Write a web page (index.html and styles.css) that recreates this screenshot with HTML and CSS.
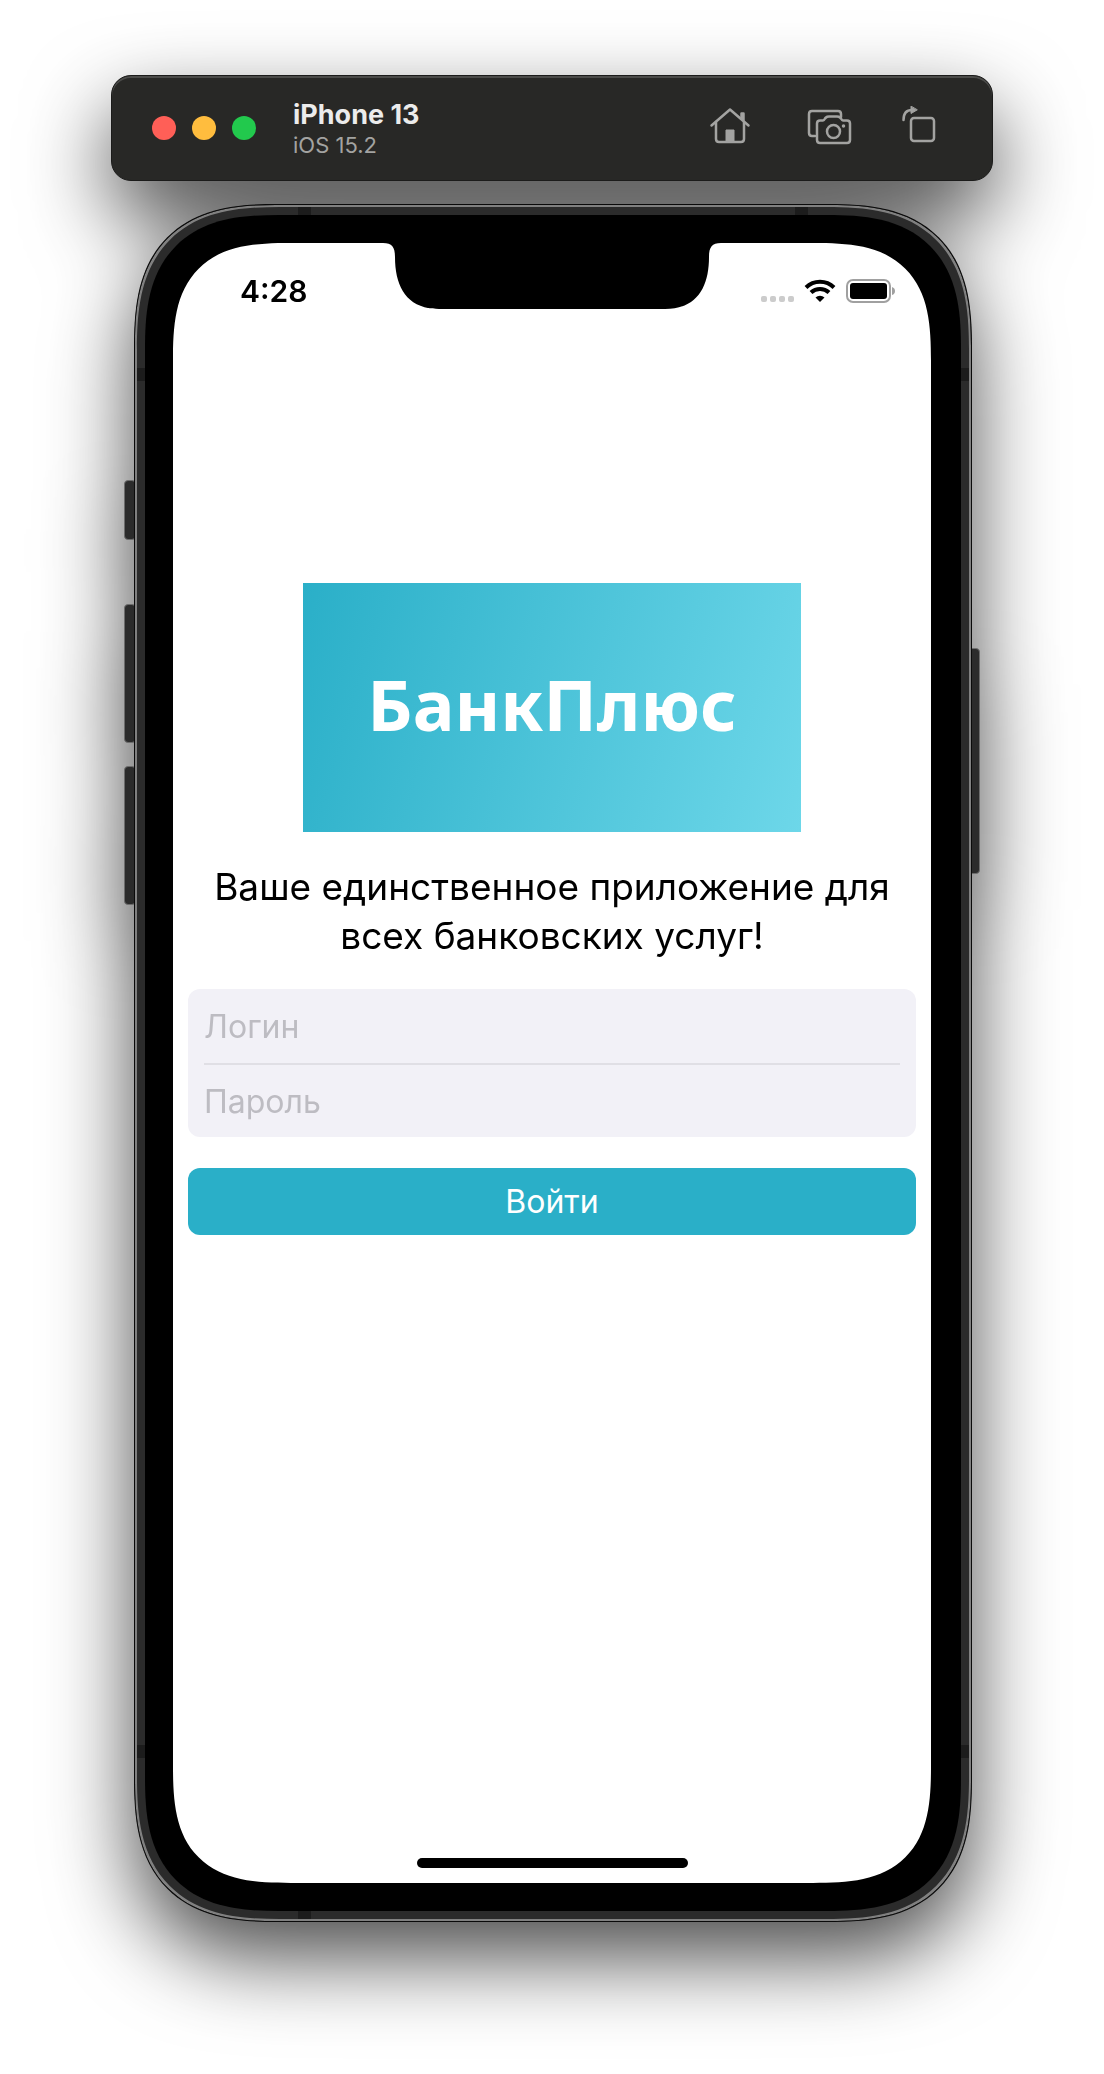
FILE: index.html
```html
<!DOCTYPE html>
<html lang="ru">
<head>
  <meta charset="utf-8">
  <meta name="viewport" content="width=device-width, initial-scale=1">
  <title>БанкПлюс</title>
  <link rel="stylesheet" href="styles.css">
</head>
<body>
  <main class="simulator">
    <header class="toolbar">
      <div class="lights">
        <button class="light light-close" type="button" aria-label="Close"></button>
        <button class="light light-minimize" type="button" aria-label="Minimize"></button>
        <button class="light light-zoom" type="button" aria-label="Zoom"></button>
      </div>
      <div class="device">
        <h1 class="device-name">iPhone 13</h1>
        <p class="device-os">iOS 15.2</p>
      </div>
      <div class="tools">
        <button class="tool" type="button" aria-label="Home">
          <svg width="44" height="44" viewBox="0 2 44 44" fill="none" stroke="currentColor" stroke-width="2.500" stroke-linecap="round" stroke-linejoin="round">
            <path d="M3.500 21.500 22 5.500l18.500 16" />
            <path d="M8 18v17q0 3 3 3h22q3 0 3-3V18" />
            <path d="M33.500 14V9.500h2V16" />
            <path d="M18 38V26h8v12z" fill="currentColor" stroke-width="1" />
          </svg>
        </button>
        <button class="tool" type="button" aria-label="Screenshot">
          <svg width="50" height="44" viewBox="-4 1 50 44" fill="none" stroke="currentColor" stroke-width="2.500" stroke-linecap="round" stroke-linejoin="round">
            <path d="M9 31H6q-3 0-3-3V9q0-3 3-3h26q3 0 3 3v3" />
            <path d="M14 15.500h3q1 0 2-2l1-1q1-1 3-1h8q2 0 3 1l1 1q1 2 2 2h4q3 0 3 3V35q0 3-3 3H14q-3 0-3-3V18.500q0-3 3-3z" />
            <circle cx="27.500" cy="26.500" r="6.500" />
            <circle cx="37.500" cy="21" r="1" fill="currentColor" stroke-width="1.500" />
          </svg>
        </button>
        <button class="tool" type="button" aria-label="Rotate">
          <svg width="36" height="44" viewBox="4 1 36 44" fill="none" stroke="currentColor" stroke-width="2.500" stroke-linecap="round" stroke-linejoin="round">
            <rect x="13" y="13" width="23" height="23" rx="3" />
            <path d="M5.500 15q0-10 8.500-10" />
            <path d="M13 1.500v7l6-3.500z" fill="currentColor" stroke-width="1" />
          </svg>
        </button>
      </div>
    </header>

    <section class="phone">
      <span class="key key-mute"></span>
      <span class="key key-up"></span>
      <span class="key key-down"></span>
      <span class="key key-power"></span>
      <div class="frame">
        <span class="band band-top-left"></span>
        <span class="band band-top-right"></span>
        <span class="band band-bottom-left"></span>
        <span class="band band-side band-left-top"></span>
        <span class="band band-side band-right-top"></span>
        <span class="band band-side band-left-bottom"></span>
        <span class="band band-side band-right-bottom"></span>
        <div class="bezel">
          <div class="screen">
            <svg class="notch" width="338" height="66" viewBox="0 0 338 66">
              <path d="M0 0C9 0 12 4 12 14C12 44 24 66 56 66H282C314 66 326 44 326 14C326 4 329 0 338 0z" />
            </svg>
            <div class="status">
              <time class="clock">4:28</time>
              <div class="indicators">
                <svg width="34" height="24" viewBox="0 0 34 24" fill="#cccccc">
                  <rect x="1" y="17" width="6" height="6" rx="2" />
                  <rect x="10" y="17" width="6" height="6" rx="2" />
                  <rect x="19" y="17" width="6" height="6" rx="2" />
                  <rect x="28" y="17" width="6" height="6" rx="2" />
                </svg>
                <svg width="32" height="24" viewBox="0 0 32 24" fill="none" stroke="#000000" stroke-width="4">
                  <path d="M2 8.500a20 20 0 0 1 28 0" />
                  <path d="M7 13.500a13 13 0 0 1 18 0" />
                  <path d="M16 23l-4.500-4.500a6.500 6.500 0 0 1 9 0z" fill="#000000" stroke="none" />
                </svg>
                <svg width="50" height="24" viewBox="0 0 50 24">
                  <rect x="1" y="1" width="43" height="22" rx="6" fill="none" stroke="#a0a0a0" stroke-width="2" />
                  <rect x="4" y="4" width="37" height="16" rx="3" />
                  <path d="M46 8q3 1 3 4t-3 4z" fill="#a0a0a0" />
                </svg>
              </div>
            </div>

            <div class="welcome">
              <div class="logo">БанкПлюс</div>
              <p class="tagline">Ваше единственное приложение для всех банковских услуг!</p>
              <form class="login">
                <div class="fields">
                  <input class="field" type="text" placeholder="Логин" aria-label="Логин">
                  <input class="field" type="password" placeholder="Пароль" aria-label="Пароль">
                </div>
                <button class="submit" type="button">Войти</button>
              </form>
            </div>
            <span class="home-bar"></span>
          </div>
        </div>
      </div>
    </section>
  </main>
</body>
</html>
```
FILE: styles.css
```css
* {
  box-sizing: border-box;
}

body {
  margin: 0;
  background: #ffffff;
  color: #000000;
  font-family: Inter, "Noto Sans", sans-serif;
}

h1,
p {
  margin: 0;
}

button,
input {
  margin: 0;
  padding: 0;
  border: 0;
  background: none;
  color: inherit;
  font: inherit;
}

svg {
  display: block;
}

.simulator {
  padding: 75px 111px 152px;
  filter: drop-shadow(0 36px 42px rgba(0, 0, 0, 0.7));
}

/* Window toolbar */

.toolbar {
  display: flex;
  align-items: center;
  padding: 20px 54px 20px 40px;
  border: 1px solid #1b1b1a;
  border-radius: 20px;
  background: #282826;
  box-shadow: inset 0 2px 0 #4b4b49;
  color: #a3a3a1;
}

.lights {
  display: flex;
  gap: 16px;
}

.light {
  width: 24px;
  height: 24px;
  border-radius: 50%;
}

.light-close {
  background: #ff5f57;
}

.light-minimize {
  background: #ffbd3e;
}

.light-zoom {
  background: #22c94d;
}

.device {
  flex: 1;
  padding: 3px 0 1px 37px;
}

.device-name {
  color: #ececec;
  font-size: 27px;
  line-height: 32px;
}

.device-os {
  font-size: 22px;
  line-height: 28px;
}

.tools {
  display: flex;
  gap: 50px;
}

/* Phone body */

.phone {
  position: relative;
  margin: 23px 21px 0 23px;
}

.frame {
  position: relative;
  padding: 10px;
  border: 1px solid #0a0a0a;
  border-radius: 144px;
  corner-shape: superellipse(1.4);
  background: #2b2b2b;
  box-shadow: inset 0 0 0 2px #808080;
}

.bezel {
  padding: 28px 30px 28px 28px;
  border-radius: 134px;
  corner-shape: superellipse(1.4);
  background: #000000;
}

.band {
  position: absolute;
  width: 13px;
  height: 8px;
  background: #1c1c1c;
}

.band-side {
  width: 8px;
  height: 13px;
}

.band-top-left {
  top: 2px;
  left: 163px;
}

.band-top-right {
  top: 2px;
  right: 163px;
}

.band-bottom-left {
  bottom: 2px;
  left: 163px;
}

.band-left-top {
  top: 163px;
  left: 2px;
}

.band-right-top {
  top: 163px;
  right: 2px;
}

.band-left-bottom {
  bottom: 163px;
  left: 2px;
}

.band-right-bottom {
  bottom: 163px;
  right: 2px;
}

.key {
  position: absolute;
  left: -10px;
  width: 12px;
  height: 139px;
  border: 1px solid #6c6c6c;
  border-radius: 4px;
  background: #2b2b2b;
}

.key-mute {
  top: 276px;
  height: 60px;
}

.key-up {
  top: 400px;
}

.key-down {
  top: 562px;
}

.key-power {
  top: 444px;
  right: -8px;
  left: auto;
  height: 226px;
}

/* Phone screen */

.screen {
  position: relative;
  display: flex;
  flex-direction: column;
  aspect-ratio: 758 / 1640;
  border-radius: 118px;
  corner-shape: superellipse(1.5);
  background: #ffffff;
}

.notch {
  position: absolute;
  top: 0;
  left: 50%;
  transform: translateX(-50%);
}

.status {
  display: flex;
  align-items: center;
  justify-content: space-between;
  height: 94px;
  padding: 2px 35px 0 67px;
}

.clock {
  font-size: 30px;
  font-weight: 600;
}

.indicators {
  display: flex;
  gap: 10px;
}

.welcome {
  display: flex;
  flex: 1;
  flex-direction: column;
  align-items: center;
  padding: 246px 15px 0;
}

.logo {
  display: flex;
  align-items: center;
  justify-content: center;
  width: 498px;
  max-width: 100%;
  height: 249px;
  padding-bottom: 7px;
  background: linear-gradient(106deg, #2aafc8, #6dd7e9);
  color: #ffffff;
  font-family: "Noto Sans", sans-serif;
  font-size: 70px;
  font-weight: 700;
  line-height: 1;
}

.tagline {
  margin: 30px 0 29px;
  font-size: 37px;
  line-height: 49px;
  text-align: center;
}

.login {
  display: flex;
  flex-direction: column;
  gap: 31px;
  width: 100%;
}

.fields {
  padding: 0 16px;
  border-radius: 12px;
  background: #f2f1f7;
}

.field {
  display: block;
  width: 100%;
  height: 74px;
  outline: 0;
  font-size: 32px;
}

.field + .field {
  border-top: 2px solid #e0dfe5;
}

.field::placeholder {
  color: #bdbcc2;
  opacity: 1;
}

.submit {
  height: 67px;
  border-radius: 12px;
  background: #2aafc8;
  color: #ffffff;
  font-size: 32px;
}

.home-bar {
  align-self: center;
  width: 271px;
  height: 10px;
  margin-bottom: 15px;
  border-radius: 5px;
  background: #000000;
}
```
